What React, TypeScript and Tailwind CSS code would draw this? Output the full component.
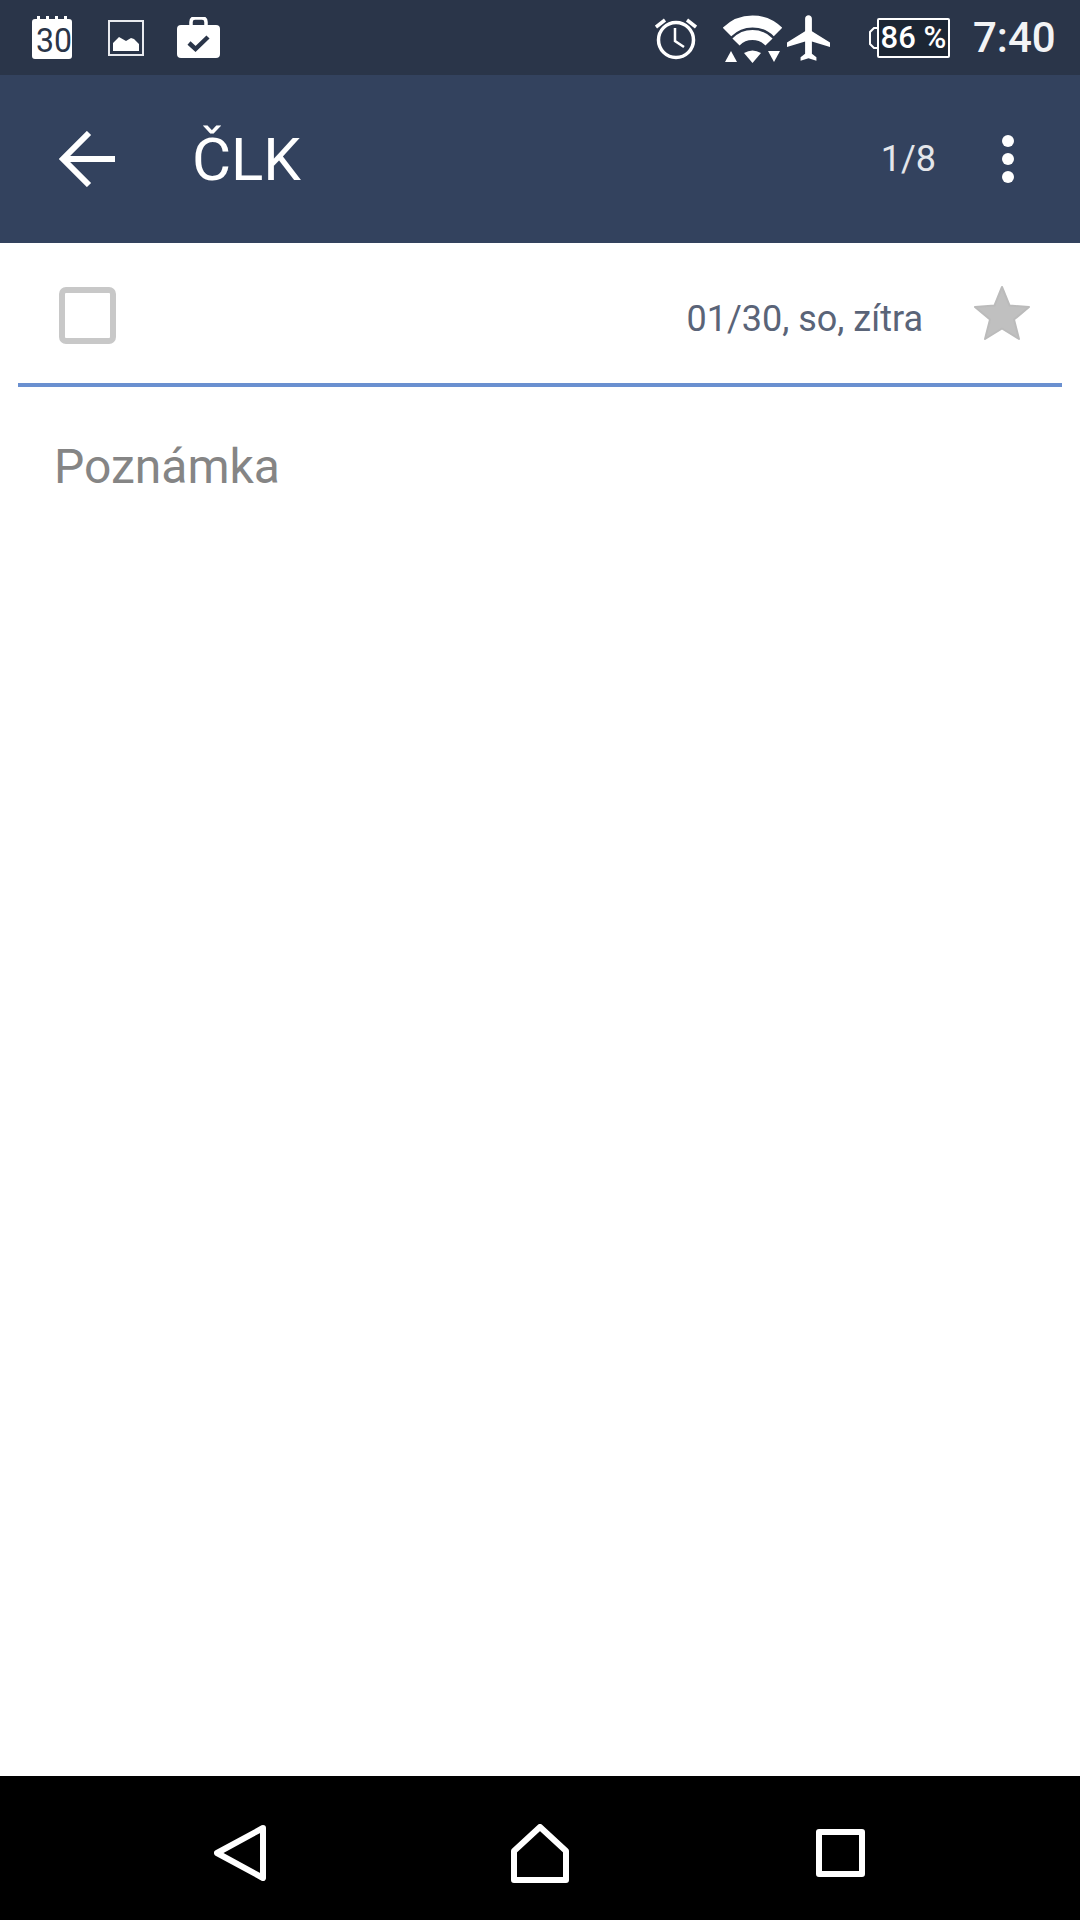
// Task detail screen: status bar, app bar, task row, note field, nav bar

const CalendarIcon = () => (
  <svg width="44" height="43" viewBox="0 0 44 43">
    <path d="M3 3h2V0h3v3h6V0h3v3h6V0h3v3h6V0h3v3h2q3 0 3 3v34q0 3-3 3H3q-3 0-3-3V6q0-3 3-3z" fill="#fff" />
    <text x="22" y="36" textAnchor="middle" fontFamily="Roboto, sans-serif" fontSize="33" fill="#2a3549" textLength="36" lengthAdjust="spacingAndGlyphs">30</text>
  </svg>
);

const ImageIcon = () => (
  <svg width="36" height="36" viewBox="0 0 36 36">
    <rect x="1" y="1" width="34" height="34" fill="none" stroke="#e8eaee" strokeWidth="2" />
    <path d="M5 31V23l6-6 7 4 5-3 3 1 5 5v7z" fill="#fff" />
  </svg>
);

const BriefcaseIcon = () => (
  <svg width="43" height="41" viewBox="0 0 43 41">
    <path d="M14 9V5q0-4 4-4h7q4 0 4 4v4" fill="none" stroke="#fff" strokeWidth="3.5" />
    <rect x="0" y="8" width="43" height="33" rx="4" fill="#fff" />
    <path d="M12 26l6.500 6L31 20" fill="none" stroke="#2a3549" strokeWidth="4.500" />
  </svg>
);

const AlarmIcon = () => (
  <svg width="42" height="44" viewBox="0 0 42 44">
    <circle cx="21" cy="24" r="17.500" fill="none" stroke="#fff" strokeWidth="3.500" />
    <path d="M20 12v13l9 6" fill="none" stroke="#fff" strokeWidth="2.500" />
    <path d="M1 11L10 4M41 11L32 4" fill="none" stroke="#fff" strokeWidth="3.500" />
  </svg>
);

const WifiIcon = () => (
  <svg width="59" height="48" viewBox="0 0 59 48">
    <path d="M4 17A36 36 0 0 1 55 17" fill="none" stroke="#fff" strokeWidth="12" />
    <path d="M13 27A23 23 0 0 1 46 27" fill="none" stroke="#fff" strokeWidth="10" />
    <path d="M21 38q8.500-5 17 0l-8.500 10z" fill="#fff" />
    <path d="M2 47L8 36l6 11z" fill="#fff" />
    <path d="M45 36h12l-6 11z" fill="#fff" />
  </svg>
);

const PlaneIcon = () => (
  <svg width="43" height="46" viewBox="2 2 19 20">
    <path d="M21 16v-2l-8-5V3.500c0-.83-.67-1.500-1.500-1.500S10 2.670 10 3.500V9l-8 5v2l8-2.500V19l-2 1.500V22l3.500-1 3.500 1v-1.500L13 19v-5.500l8 2.500z" fill="#fff" />
  </svg>
);

const BackArrow = () => (
  <svg width="56" height="56" viewBox="0 0 56 56">
    <path d="M30 2L4 28l26 26M4 28h52" fill="none" stroke="#fff" strokeWidth="6" />
  </svg>
);

const StarIcon = () => (
  <svg width="58" height="56" viewBox="0 0 58 56">
    <path d="M29 2l7.500 18.500L56 22 41 34.500 46 54 29 43.500 12 54l5-19.500L2 22l19.500-1.500z" fill="#c0c0c0" stroke="#bbbbbb" strokeWidth="2" strokeLinejoin="round" />
  </svg>
);

const App = () => {
  return (
    <div className="flex flex-col w-[1080px] h-[1920px] bg-white font-['Roboto',sans-serif]">
      {/* status bar */}
      <div className="flex items-center h-[75px] shrink-0 bg-[#2a3549] text-white">
        <div className="ml-[32px] mt-[-1px]"><CalendarIcon /></div>
        <div className="ml-[32px]"><ImageIcon /></div>
        <div className="ml-[33px]"><BriefcaseIcon /></div>
        <div className="ml-[435px]"><AlarmIcon /></div>
        <div className="ml-[26px] mt-[3px]"><WifiIcon /></div>
        <div className="ml-[5px]"><PlaneIcon /></div>
        <div className="flex items-center ml-[39px]">
          <svg width="8" height="22" viewBox="0 0 8 22">
            <path d="M8 1H5L1 5v12l4 4h3" fill="none" stroke="#fff" strokeWidth="2" />
          </svg>
          <div className="flex items-center justify-center w-[73px] h-[40px] border-2 border-white rounded-[2px] bg-[#1c2634] text-[31px] leading-none font-medium">
            86 %
          </div>
        </div>
        <span className="ml-[23px] text-[42px] leading-none font-medium text-[#f2f3f5]">7:40</span>
      </div>

      {/* app bar */}
      <div className="flex items-center h-[168px] shrink-0 bg-[#33425e] text-white">
        <div className="ml-[59px]"><BackArrow /></div>
        <h1 className="ml-[77px] mt-[2px] text-[60px] leading-none font-normal">ČLK</h1>
        <span className="ml-auto text-[36px] leading-none text-[#e4e6ea]">1/8</span>
        <div className="flex flex-col gap-[6px] ml-[66px] mr-[66px]">
          <div className="w-[12px] h-[12px] rounded-full bg-white" />
          <div className="w-[12px] h-[12px] rounded-full bg-white" />
          <div className="w-[12px] h-[12px] rounded-full bg-white" />
        </div>
      </div>

      {/* task row */}
      <div className="flex items-center h-[144px] mx-[18px] shrink-0 border-b-4 border-[#6a90d0]">
        <div className="ml-[41px] mt-[4px] w-[57px] h-[57px] border-[6px] border-[#c8c8c8] rounded-[7px]" />
        <span className="ml-auto mt-[12px] text-[36px] leading-none text-[#5a6478]">01/30, so, zítra</span>
        <div className="ml-[50px] mr-[31px]"><StarIcon /></div>
      </div>

      {/* note */}
      <div className="flex-1 px-[54px] pt-[56px] text-[48px] leading-none text-[#858585]">Poznámka</div>

      {/* nav bar */}
      <div className="flex items-center h-[144px] pt-[10px] shrink-0 bg-black">
        <svg className="ml-[214px]" width="52" height="56" viewBox="0 0 52 56">
          <path d="M49 3L3 28l46 25z" fill="none" stroke="#fff" strokeWidth="6" strokeLinejoin="round" />
        </svg>
        <svg className="ml-[245px]" width="58" height="59" viewBox="0 0 58 59">
          <path d="M29 3L3 27v29h52V27z" fill="none" stroke="#fff" strokeWidth="6" strokeLinejoin="round" />
        </svg>
        <div className="ml-[247px] w-[49px] h-[48px] border-[6px] border-white rounded-[3px]" />
      </div>
    </div>
  );
};

export default App;
